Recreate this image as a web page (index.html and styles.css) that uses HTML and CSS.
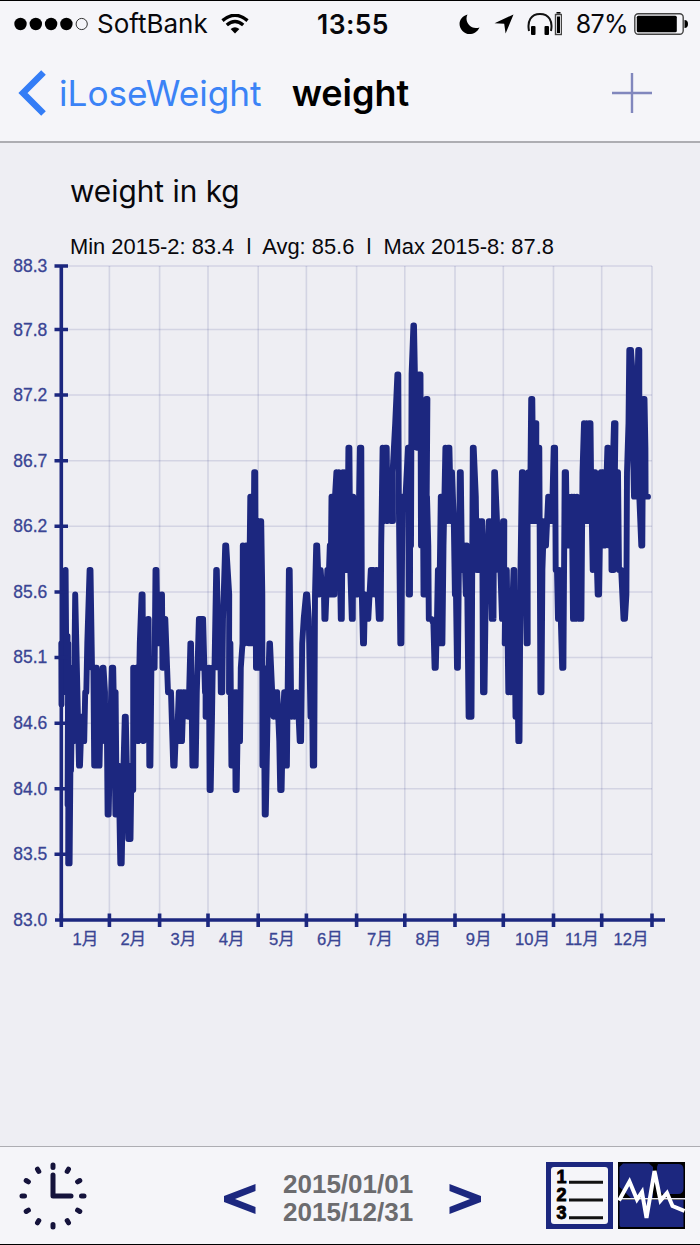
FILE: index.html
```html
<!DOCTYPE html>
<html lang="ja">

<head>
    <meta charset="utf-8" />
    <title>weight</title>
    <link rel="stylesheet" href="styles.css">
</head>

<body>
    <div class="app">
        <header class="top">
            <div class="statusbar">
                <div class="status-left">
                    <svg class="signal" width="75" height="14" viewBox="0 0 75 14">
                        <circle cx="6.5" cy="7" r="6.2" />
                        <circle cx="21.8" cy="7" r="6.2" />
                        <circle cx="37.1" cy="7" r="6.2" />
                        <circle cx="52.4" cy="7" r="6.2" />
                        <circle class="empty" cx="67.7" cy="7" r="5.6" />
                    </svg>
                    <span class="carrier">SoftBank</span>
                    <svg class="wifi" width="28" height="20" viewBox="0 0 28 20">
                        <path class="arc" d="M1.5 6.6 Q14 -4 26.5 6.6" />
                        <path class="arc" d="M5.8 11 Q14 4 22.2 11" />
                        <path d="M14 19.5 L9.6 15 Q14 11.4 18.4 15 Z" />
                    </svg>
                </div>
                <div class="clock-text">13:55</div>
                <div class="status-right">
                    <svg width="21" height="21" viewBox="0 0 21 21">
                        <path d="M8.5 .5 C5 7 11 16.5 20.5 13.5 C17 21 8 22 3.5 17 C-2 11 .5 3 8.5 .5 Z" />
                    </svg>
                    <svg class="arrow" width="20" height="20" viewBox="0 0 20 20">
                        <path d="M19.5 .5 L11.6 19.5 L10.2 9.8 L.5 9.2 Z" />
                    </svg>
                    <svg class="headphones" width="35" height="24" viewBox="0 0 35 24">
                        <path class="line" d="M2 19 C0 9 4 2 13 2 C22 2 26 9 24 19" />
                        <rect x="4" y="14" width="4.5" height="9" rx="1" />
                        <rect x="17.5" y="14" width="4.5" height="9" rx="1" />
                        <rect class="cell" x="28.5" y="2.5" width="6" height="20" />
                        <rect x="30" y="4.5" width="3" height="16.5" />
                        <rect x="29.5" y="0" width="4" height="1.6" />
                    </svg>
                    <span class="percent">87%</span>
                    <svg class="battery" width="54" height="22" viewBox="0 0 54 22">
                        <rect class="case" x=".8" y=".8" width="48.4" height="20.4" rx="3.5" />
                        <rect x="2.8" y="2.8" width="40" height="16.4" rx="1.5" />
                        <path d="M50.5 7 Q54 7 54 11 Q54 15 50.5 15 Z" />
                    </svg>
                </div>
            </div>
            <nav class="navbar">
                <a class="back">
                    <svg width="28" height="46" viewBox="0 0 28 46">
                        <path d="M25.5 2.5 L5 23 L25.5 43.5" />
                    </svg>
                    <span>iLoseWeight</span>
                </a>
                <h1 class="title">weight</h1>
                <svg class="add" width="40" height="40" viewBox="0 0 40 40">
                    <path d="M20 0 V40 M0 20 H40" />
                </svg>
            </nav>
        </header>

        <main class="content">
            <h2 class="chart-title">weight in kg</h2>
            <p class="summary">Min 2015-2: 83.4 &nbsp;l&nbsp; Avg: 85.6 &nbsp;l&nbsp; Max 2015-8: 87.8</p>
            <svg class="chart" width="700" height="700" viewBox="0 256 700 700">
                <path class="grid" d="M61 266H652 M61 329.5H652 M61 395H652 M61 460.8H652 M61 526.3H652 M61 592H652 M61 657.5H652 M61 723.2H652 M61 788.7H652 M61 854.3H652" />
                <path class="grid" d="M109.4 266V920 M159.6 266V920 M208 266V920 M258.2 266V920 M306.4 266V920 M356.6 266V920 M404.8 266V920 M455 266V920 M503.3 266V920 M553.5 266V920 M601.7 266V920 M652 266V920" />
                <!-- y unit is one 0.2 kg step above the yearly minimum -->
                <g transform="translate(0 863.4) scale(1 -24.45)">
                    <polyline class="readings" points="
                        61.5,6.5 61.3,9 62.8,7 64,9 65.6,12 66.5,7 67.5,9.3 67.3,7 68.2,9 67.6,2.4 68.4,4 68.2,0 69.6,0 70.6,5 71,3.8 72.5,8 73.5,5 75.2,11 76.6,8.5 79,4 80,4 81.6,6 82.5,5 84.2,5
                        85.2,7 86.3,7 87.3,9 89.6,12 90.5,12 92,8 93.4,8 94.2,4 95.5,8 96.7,8 96.4,4 98,7 99.5,4 101,7 102.7,8 103.5,8 105,7 105,5 107,5 107.6,2 108.7,2 110,5 111.8,8 113.2,8 114.5,5
                        115.4,2 115.6,7 116.7,2 118.6,4 120.3,0 121.7,0 123.5,4 124.8,6 125.8,6 128.3,1 128.5,4 130.5,1 131.5,4 133.2,3 133.2,8 134.5,5 136.3,8 138,5 139.8,9 141.6,11 142.6,11 143.5,5 145,6 148,10
                        148.6,10 149.3,4 150.4,4 151.4,8 154.6,8 155.5,12 156.5,12 157.5,9 159,11 160.5,9 162,11 162.5,8 164,10 165.3,10 168,7 171,7 173.2,4 174.6,4 175.5,5 177,5 178.8,7 180.2,5 181,7 182,5 183.5,7 184.5,6 186.5,7
                        188.5,6 190.4,9 191,9 192.4,4 194,6 194.5,4 195.7,4 196.8,7 198.9,10 200,8 201.6,10 203.1,10 205,7 205.6,8 205.6,6 207,6 209,8 209.6,3 210.7,3 212,6 212.7,8 214.5,8 216.2,12 216.8,12 218.8,8 220.3,9
                        220.8,7 222.3,7 223,10 225.2,13 226.2,13 229.2,11 229,7 230.4,9 231.4,4 233,6 233.5,4 235,7 235.5,3 236.7,3 238.2,7 240,5 240.8,8 242.5,9 242.8,13 244.5,9 246,13 247.8,13 248.6,9 250.3,15 251,9 252.5,15 253,9 254.2,16 255.2,16 256,8
                        257.2,14 258.2,8 260,14 260.5,8 261.2,14 262.3,11 262.4,4 263.8,8 264.7,2 265.8,2 268,7 269.4,9 270,9 272.2,7 273.5,6 275,7 275.7,6 277.2,7 279.3,5 280.2,3 281.6,3 283,6 284.2,7 285.5,4 286.9,4 288.9,12 289.7,12
                        291,7 291.7,6 293,7 294.5,6 296.5,7 298.6,6 299.7,5 301.1,5 302.2,9 303.7,10 306,11 307.2,11 308.8,10 310.5,6 311.6,9 312.8,4 314.2,4 315,11 316.2,13 317.2,13 319,11 320.7,12 322.2,11 324,11 324.4,10 325.5,10 327.3,12 328.2,11
                        329.8,13 330.5,11 331.5,15 332.5,11 334.4,11 335,15 336.4,16 337.4,12 338.8,16 340,12 340.8,10 341.8,10 343,16 344.8,12 346.2,16 347.3,12 348.4,17 349.4,17 350.3,12 351.8,10 352.8,10 353.3,15 355.2,11 355.5,14 357.5,11 359.9,17
                        361.3,17 361.8,11 363,9 364,9 365,11 366,10 368.3,10 370.8,12 372,11 373.5,12 375,11 376.6,12 378.8,10 380.7,10 381.2,13 382.6,17 383.5,14 385,17 386.7,17 387.5,14 389.2,15 391,14 393,14 392.6,16 395.2,18 397.4,20 398.3,20
                        398.8,15 399.8,11 400.3,9 401.4,9 402.5,15 405.5,15 408,17 408.7,11 410,11 410.2,17 411,13 411.6,20 413.4,22 414,22 414.9,20 416,17.7 417.2,20 417,17 418.8,20 420.5,20 421,13 422.7,17 423.5,11 426.2,19 427.4,19 426,11 427,15 428.3,13
                        428.8,10 431.5,10 433.4,9.8 434.6,8 435.8,8 437,10 437.9,12 438.8,9 440.8,15 441.2,9 442.4,9 443.5,13 445.4,17 447,14 448,17 449.4,17 451,14 452,16 453.8,14 454.9,11 456,11 457,8 457.9,8 459.8,16 460.8,16 462,12 464.4,13 465.8,11 466.8,13
                        468.6,6 469.3,11 470.5,6 471.5,6 472.8,17 473.7,17 475.8,15 476.8,12 478,14 479.2,12 481,14 482.2,14 483,7 484.5,7 486,12 487.6,13 488.8,14 490,14 491.8,10 493,12 493.5,10 494.2,16 495,16 497,14 498.5,12 500.4,12 502,10
                        503,14 504.3,14 504,10 505.5,12 504.7,9 506.8,12 508.3,7 509.4,11 510.8,7 512,10 513.5,12 514.3,12 515.5,6 517,10 518.3,5 519.5,5 520.5,12 521.9,16 522.9,16 525,13 526.6,9 527.7,9 527.6,14 528.4,16 530,14 531.2,19 532.3,19 533.5,14 535,18 536.3,18 536.2,14 538,17
                        539.3,17 540.4,7 541.5,7 542.4,12 544,14 545.4,14 546,13 548.2,15 549.6,14 551.2,15 551.9,14 553.7,17 555.1,17 555.7,12 557,12 558,10 559.3,12 560.8,10 562.2,8 563.4,8 564.7,16 566,16 567,13 568.8,15 570.2,13 571.8,15 573,10 574.2,15
                        575.7,10 577,15 578,14 579.5,10 581.4,10 582.5,16 584,18 585.2,14 586.6,18 588,14 589,18 590.5,18 591,16 592.7,12 594.2,16 595.2,16 596.3,13 597.7,11 599.1,11 600.9,16 602,13 603.8,16 604.5,13 607.4,17 608.3,17 609,13 611,16 611.5,12 612.6,16
                        614,18 615.5,18 613.7,12 617,16 618,16 619,12 621.2,12 623.5,10 625,10 626.4,11 627,16 628.5,18 629.3,21 631,21 632.6,20 632.5,18 634,15 636.2,20 635.8,15 638.2,21 639.3,21 639.3,15 641.3,13 642.3,13 643.2,19 644.5,19 645.4,17 645.6,15 648,15" />
                </g>
                <path class="axis" d="M61.3 266V920 M55 920H665" />
                <path class="axis" d="M54.5 266H68 M54.5 329.5H68 M54.5 395H68 M54.5 460.8H68 M54.5 526.3H68 M54.5 592H68 M54.5 657.5H68 M54.5 723.2H68 M54.5 788.7H68 M54.5 854.3H68" />
                <path class="axis" d="M61.3 913.5V927 M109.4 913.5V927 M159.6 913.5V927 M208 913.5V927 M258.2 913.5V927 M306.4 913.5V927 M356.6 913.5V927 M404.8 913.5V927 M455 913.5V927 M503.3 913.5V927 M553.5 913.5V927 M601.7 913.5V927 M652 913.5V927" />
                <g class="y-labels">
                    <text x="47.3" y="271.5">88.3</text>
                    <text x="47.3" y="335.5">87.8</text>
                    <text x="47.3" y="401">87.2</text>
                    <text x="47.3" y="466.5">86.7</text>
                    <text x="47.3" y="532">86.2</text>
                    <text x="47.3" y="597.8">85.6</text>
                    <text x="47.3" y="663.3">85.1</text>
                    <text x="47.3" y="729">84.6</text>
                    <text x="47.3" y="794.5">84.0</text>
                    <text x="47.3" y="860">83.5</text>
                    <text x="47.3" y="925.5">83.0</text>
                </g>
                <g class="x-labels">
                    <text x="85.5" y="945">1月</text>
                    <text x="133.3" y="945">2月</text>
                    <text x="183.5" y="945">3月</text>
                    <text x="231.7" y="945">4月</text>
                    <text x="282" y="945">5月</text>
                    <text x="330" y="945">6月</text>
                    <text x="380" y="945">7月</text>
                    <text x="428.3" y="945">8月</text>
                    <text x="478.7" y="945">9月</text>
                    <text x="532.5" y="945">10月</text>
                    <text x="582" y="945">11月</text>
                    <text x="631" y="945">12月</text>
                </g>
            </svg>
        </main>

        <footer class="toolbar">
            <svg class="clock" width="68" height="68" viewBox="-34 -34 68 68">
                <path class="hands" d="M0 -21 V0 H18" />
                <path class="ticks" d="M0 -31V-28.5 M0 31V28.5 M-31 0H-28.5 M31 0H28.5 M15.5 -26.8L14.2 -24.6 M26.8 -15.5L24.6 -14.2 M26.8 15.5L24.6 14.2 M15.5 26.8L14.2 24.6 M-15.5 26.8L-14.2 24.6 M-26.8 15.5L-24.6 14.2 M-26.8 -15.5L-24.6 -14.2 M-15.5 -26.8L-14.2 -24.6" />
            </svg>
            <div class="range">
                <svg class="step" width="32" height="30" viewBox="0 0 32 30">
                    <path d="M31.5 0 V7 L11 15 L31.5 23 V30 L0 18 V12 Z" />
                </svg>
                <div class="dates">
                    <div>2015/01/01</div>
                    <div>2015/12/31</div>
                </div>
                <svg class="step next" width="32" height="30" viewBox="0 0 32 30">
                    <path d="M.5 0 V7 L21 15 L.5 23 V30 L32 18 V12 Z" />
                </svg>
            </div>
            <div class="views">
                <svg width="67" height="67" viewBox="0 0 67 67">
                    <rect class="navy" width="67" height="67" />
                    <rect class="paper" x="5" y="5" width="57" height="57" rx="3" />
                    <path class="rule" d="M23 20.3H57 M23 38H57 M23 55.8H57" />
                    <g class="digits">
                        <text x="10.5" y="21.3">1</text>
                        <text x="10.5" y="39.2">2</text>
                        <text x="10.5" y="57.2">3</text>
                    </g>
                </svg>
                <svg width="67" height="67" viewBox="0 0 67 67">
                    <rect width="67" height="67" />
                    <path class="navy" d="M5 1.5H31L35 5V37H14L1.5 25V5Z M40 2H61Q65.5 2 65.5 8V26Q65.5 32 60 32H45L39 27V5Z M3 38H65.5V65H3Q1.5 65 1.5 63V40Z" />
                    <path class="midline" d="M0 36.7H67" />
                    <path class="pulse" d="M1 38.5 L11.5 19.5 L19 37.5 L24 30 L28.5 56 L36.5 9 L42.5 38.5 L49 31 L54.5 44 L66.5 49" />
                </svg>
            </div>
        </footer>
    </div>
</body>

</html>
```
FILE: styles.css
```css
* {
    box-sizing: border-box;
}

body {
    margin: 0;
    overflow: hidden;
    background-color: #eeeef3;
    color: #08080c;
    font-family: Inter, "Liberation Sans", sans-serif;
}

.app {
    display: flex;
    flex-direction: column;
    height: 1245px;
    border-top: 1px solid #000;
    border-bottom: 1px solid #000;
}

svg {
    display: block;
    flex-shrink: 0;
}

.top {
    height: 142px;
    background-color: #f5f5f9;
    border-bottom: 2px solid #adadb2;
}

.statusbar {
    display: grid;
    grid-template-columns: 1fr auto 1fr;
    align-items: center;
    height: 46px;
    padding: 0 12px 0 14px;
    font-size: 25.5px;
    line-height: 46px;
}

.status-left,
.status-right {
    display: flex;
    align-items: center;
}

.status-right {
    justify-content: flex-end;
}

.signal .empty {
    fill: none;
    stroke: #333;
    stroke-width: 1;
}

.carrier {
    margin-left: 8px;
    font-size: 26px;
}

.wifi {
    margin-left: 13px;
}

.wifi .arc {
    fill: none;
    stroke: #000;
    stroke-width: 3.4;
}

.clock-text {
    padding-left: 4px;
    font-size: 26.5px;
    font-weight: 600;
    letter-spacing: 0.4px;
}

.arrow {
    margin-left: 14px;
}

.headphones {
    margin-left: 13px;
}

.headphones .line {
    fill: none;
    stroke: #111;
    stroke-width: 2;
}

.headphones .cell,
.battery .case {
    fill: none;
    stroke: #444;
    stroke-width: 1.4;
}

.percent {
    margin-left: 14px;
    font-size: 25px;
    letter-spacing: -0.6px;
}

.battery {
    margin-left: 6px;
}

.navbar {
    display: flex;
    align-items: center;
    height: 92px;
    padding: 0 48px 0 18px;
}

.back {
    display: flex;
    align-items: center;
    gap: 13px;
    color: #3b83f6;
    font-size: 35.2px;
}

.back path {
    fill: none;
    stroke: #347df6;
    stroke-width: 6.5;
}

.title {
    margin: 0 0 0 30px;
    color: #000;
    font-size: 36px;
    font-weight: 600;
}

.add {
    margin-left: auto;
}

.add path {
    stroke: #8187bd;
    stroke-width: 2.4;
}

.content {
    flex: 1;
    padding-top: 28px;
}

.chart-title {
    margin: 0 0 0 70px;
    font-size: 29.8px;
    font-weight: 400;
    line-height: 40px;
}

.summary {
    margin: 23px 0 0 70px;
    font-family: "Liberation Sans", sans-serif;
    font-size: 21.9px;
    line-height: 26px;
    height: 22px;
}

.grid {
    fill: none;
    stroke: #1c277f;
    stroke-opacity: 0.13;
    stroke-width: 1.6;
}

.axis {
    fill: none;
    stroke: #1c277f;
    stroke-width: 3.6;
}

.readings {
    fill: none;
    stroke: #1c277f;
    stroke-width: 5.9;
    stroke-linecap: round;
    stroke-linejoin: round;
    vector-effect: non-scaling-stroke;
}

.y-labels,
.x-labels {
    fill: #3a4594;
    font-family: "Liberation Sans", "Noto Sans CJK JP", sans-serif;
    font-size: 17.5px;
    stroke: #3a4594;
    stroke-width: 0.3;
}

.y-labels {
    text-anchor: end;
}

.x-labels {
    text-anchor: middle;
    font-size: 16.6px;
}

.toolbar {
    display: flex;
    align-items: center;
    height: 98px;
    padding: 0 15px 0 19px;
    background-color: #f5f5f9;
    border-top: 1px solid #adadb2;
}

.clock path {
    fill: none;
    stroke: #15133c;
    stroke-linecap: round;
    stroke-linejoin: round;
    stroke-width: 5;
}

.range {
    display: flex;
    align-items: center;
    gap: 27px;
    margin-left: 137px;
}

.step {
    margin-top: 6px;
}

.next {
    margin-left: 9px;
}

.step path,
.navy {
    fill: #1c277f;
}

.dates {
    padding-top: 5px;
    color: #6c6c6f;
    font-family: "Liberation Sans", sans-serif;
    font-size: 26px;
    font-weight: 700;
    line-height: 28.5px;
}

.views {
    display: flex;
    gap: 5px;
    margin-left: auto;
}

.paper {
    fill: #f5f5f9;
}

.rule {
    stroke: #111;
    stroke-width: 3;
}

.digits {
    font-family: "Liberation Sans", sans-serif;
    font-size: 18px;
    font-weight: 700;
    stroke: #000;
    stroke-width: 0.9;
}

.midline {
    stroke: #e8e8f4;
    stroke-width: 1.4;
}

.pulse {
    fill: none;
    stroke: #fff;
    stroke-width: 4;
}
```
